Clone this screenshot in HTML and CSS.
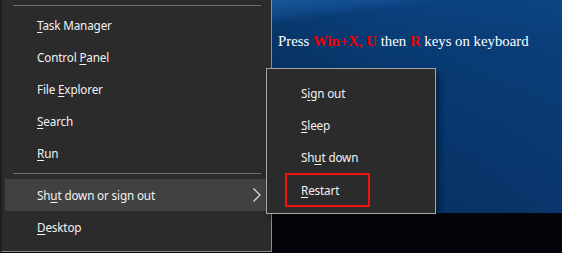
FILE: index.html
```html
<!DOCTYPE html>
<html>
<head>
<meta charset="utf-8">
<link rel="stylesheet" href="styles.css">
</head>
<body>
<div class="screen">
  <nav class="menu">
    <div class="sep sep-top"></div>
    <div class="item"><span><u>T</u>ask Manager</span></div>
    <div class="item"><span>Control <u>P</u>anel</span></div>
    <div class="item"><span>File <u>E</u>xplorer</span></div>
    <div class="item"><span><u>S</u>earch</span></div>
    <div class="item"><span><u>R</u>un</span></div>
    <div class="sep sep-mid"></div>
    <div class="item active">
      <span>Sh<u>u</u>t down or sign out</span>
      <svg class="chev" width="8" height="14" viewBox="0 0 8 14"><polyline points="0.5,0.5 7,7 0.5,13.5" fill="none" stroke="#e6e6e6" stroke-width="1.1"/></svg>
    </div>
    <div class="item"><span><u>D</u>esktop</span></div>
  </nav>
  <section class="desktop">
    <div class="wallpaper">
      <p class="hint">Press <b>Win+X, U</b> then <b>R</b> keys on keyboard</p>
    </div>
    <div class="taskbar"></div>
  </section>
  <div class="submenu">
    <div class="sub-item"><span>S<u>i</u>gn out</span></div>
    <div class="sub-item"><span><u>S</u>leep</span></div>
    <div class="sub-item"><span>Sh<u>u</u>t down</span></div>
    <div class="sub-item boxed"><span><u>R</u>estart</span></div>
  </div>
</div>
</body>
</html>
```

FILE: styles.css
```css
html, body {
  margin: 0;
  padding: 0;
}
body {
  width: 562px;
  height: 253px;
  overflow: hidden;
  background: #03050a;
}
.screen {
  position: relative;
  display: flex;
  width: 562px;
  height: 253px;
  font-family: "Noto Sans", "Open Sans", sans-serif;
  font-size: 11.7px;
  letter-spacing: -0.15px;
  color: #f2f2f2;
}
.menu {
  box-sizing: border-box;
  width: 272px;
  height: 252px;
  background: #2b2b2b;
  border-left: 2px solid #1e1e1e;
  border-right: 1px solid #8c8c8c;
  border-bottom: 1px solid #8c8c8c;
  padding: 5px 4px 0 3px;
  display: flex;
  flex-direction: column;
}
.sep {
  height: 1px;
  background: #6e6e6e;
  margin: 0 6px 0 8px;
  flex: none;
}
.sep-top { margin-bottom: 3px; }
.sep-mid { margin-top: 4px; margin-bottom: 5px; }
.item {
  height: 32px;
  flex: none;
  display: flex;
  align-items: center;
  justify-content: space-between;
  padding: 0 6px 0 32px;
  box-sizing: border-box;
  white-space: nowrap;
}
.item u, .sub-item u {
  text-decoration: underline;
  text-underline-offset: 2px;
}
.item.active {
  background: #414141;
}
.chev { display: block; }
.desktop {
  flex: 1;
  display: flex;
  flex-direction: column;
}
.wallpaper {
  height: 213px;
  flex: none;
  background:
    linear-gradient(172deg, rgba(40,110,190,0.55) 0%, rgba(30,100,180,0.35) 6%, rgba(0,0,0,0) 10%),
    linear-gradient(90deg, rgba(0,0,0,0.12) 0%, rgba(0,0,0,0) 40%, rgba(20,80,150,0.18) 100%),
    linear-gradient(180deg, #0a417f 0%, #083a72 25%, #07356a 60%, #063062 100%);
  padding: 32px 0 0 6px;
  box-sizing: border-box;
}
.hint {
  margin: 0;
  font-family: "Liberation Serif", "Times New Roman", serif;
  font-size: 14.8px;
  letter-spacing: 0;
  line-height: 18px;
  color: #ffffff;
  white-space: nowrap;
}
.hint b {
  color: #ee0000;
}
.taskbar {
  flex: 1;
  background: #03050a;
}
.submenu {
  position: absolute;
  left: 266px;
  top: 68px;
  width: 170px;
  height: 146px;
  box-sizing: border-box;
  background: #2b2b2b;
  border: 1px solid #a6a6a6;
  padding: 8px 0 0 0;
  box-shadow: 4px 4px 6px rgba(0,0,0,0.35);
}
.sub-item {
  height: 32px;
  display: flex;
  align-items: center;
  padding-left: 34px;
  box-sizing: border-box;
  white-space: nowrap;
}
.sub-item.boxed {
  width: 85px;
  height: 34px;
  margin-left: 18px;
  padding-left: 14px;
  border: 2px solid #ee1111;
}
```
